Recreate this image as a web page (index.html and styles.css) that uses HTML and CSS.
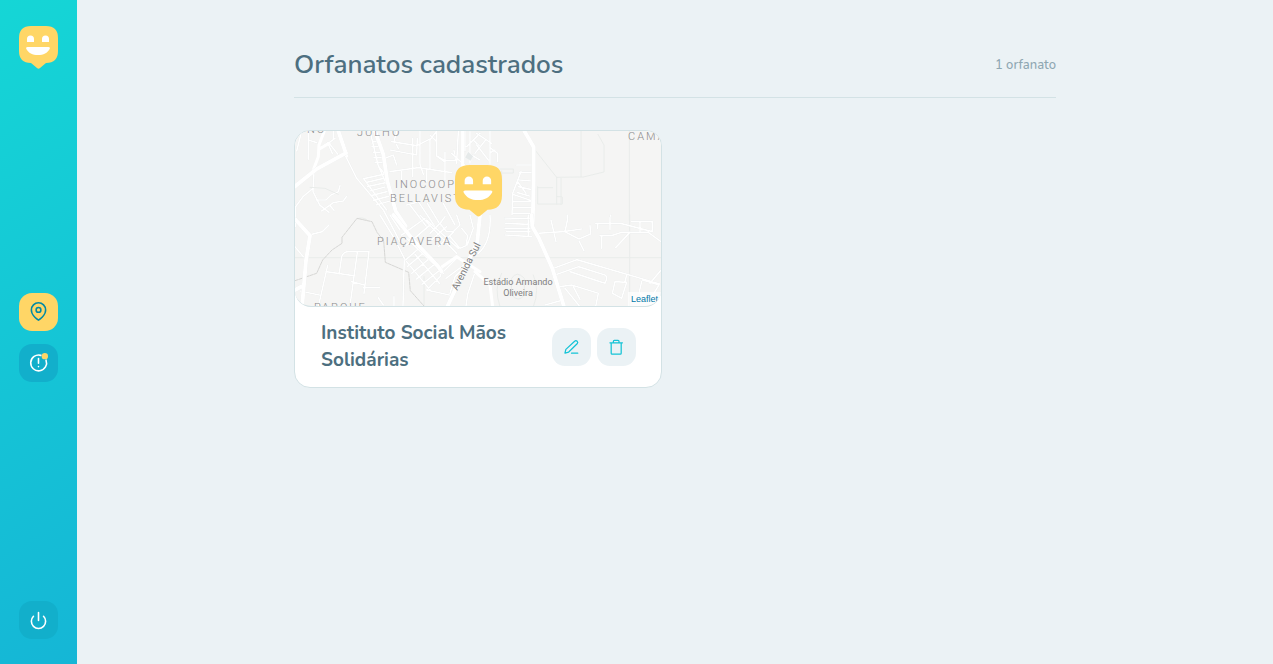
FILE: index.html
```html
<!DOCTYPE html>
<html lang="pt-BR">
<head>
<meta charset="utf-8">
<meta name="viewport" content="width=device-width, initial-scale=1">
<title>Orfanatos cadastrados</title>
<link rel="stylesheet" href="styles.css">
</head>
<body>
<svg class="defs" aria-hidden="true">
  <symbol id="smile" viewBox="0 0 39 43">
    <path fill="#ffd666" d="M12 0h15q12 0 12 12v13q0 12-12 12l-6 5q-1.500 1.300-3 0l-6-5Q0 37 0 25V12Q0 0 12 0z"/>
    <path fill="#fff" d="M8 16v-3a3.500 3.500 0 0 1 7 0v3zM23 16v-3a3.500 3.500 0 0 1 7 0v3zM8.500 21h21q2 0 1.300 1.700C28.500 27 24.500 29 19 29S9.500 27 7.200 22.700Q6.500 21 8.500 21z"/>
  </symbol>
</svg>
<div class="app">
  <aside class="sidebar">
    <svg class="logo" role="img" aria-label="Happy"><use href="#smile"/></svg>
    <nav class="menu">
      <button class="side-button active" type="button" aria-label="Orfanatos cadastrados">
        <svg class="icon" viewBox="0 0 24 24"><path d="M21 10c0 7-9 13-9 13S3 17 3 10a9 9 0 0 1 18 0z"/><circle cx="12" cy="10" r="3"/></svg>
      </button>
      <button class="side-button" type="button" aria-label="Cadastros pendentes">
        <svg class="icon" viewBox="0 0 24 24"><path d="M15 3A10 10 0 1 0 21.500 9M12 7v6M12 17v.2"/><circle class="dot" cx="20" cy="4" r="4"/></svg>
      </button>
    </nav>
    <button class="side-button" type="button" aria-label="Sair">
      <svg class="icon" viewBox="0 0 24 24"><path d="M18.360 6.640a9 9 0 1 1-12.730 0M12 2v10"/></svg>
    </button>
  </aside>
  <main class="main">
    <div class="content">
      <header class="header">
        <h1 class="title">Orfanatos cadastrados</h1>
        <span class="count">1 orfanato</span>
      </header>
      <div class="cards">
        <article class="card">
          <div class="map">
            <svg class="map-drawing" viewBox="0 0 366 175" preserveAspectRatio="xMidYMid slice" role="img" aria-label="Mapa">
              <g class="roads" transform="translate(-5 -6) scale(.3333)">
                <path class="minor" d="M55 18v85M35 18l-15 60M55 45l25 8M90 70l25-18 28 35M105 62l30-22M130 18v25M115 58l12 27M72 140l-3 60 20 40 28 22M69 190l-30 25-22 30v60M78 225l30 0 15-15 22-10 5-18M95 258l35-25 30-5 10-14M120 242l12 14"/>
                <path class="minor" d="M165 90l35 70 80 95 50 95M240 18l25 105 25 55M248 50h20M246 65h22M250 82h25M252 98h25M255 112h25M225 160l55-12M230 172l50-12M232 185l55-12M240 198l45-12M243 212l48-12M250 226l45-12M258 240l42-12M220 160l70 95M265 123l20 25"/>
                <path class="minor" d="M285 100l25-10 10 30M305 50l75 12 40-20v90M300 75l80 15 2-50M325 70l-12-25 8-27M368 40v115M390 18v100l10 30M420 45l20-27v75l25 18v-30M445 95l20 12h32l-5-30M465 110v55M300 140l85-12 100 15M335 135v35M410 130v40M440 50l-20-20M360 240l50 65M385 230l50 75M412 235l42 70M460 235l35 65M350 240l30-8"/>
                <path class="minor" d="M505 20l-5 95M525 18v60M485 85l60 55M540 20v95M530 65l40-40M535 85l35 20M550 45l20 20"/>
                <path class="block" d="M535 80l15 14-8 14-17-10z"/>
                <path class="thin" d="M60 187l45 3 40 18M200 282q15-8 30 2"/>
                <path class="road" d="M103 18L87 60 85 95 68 140M145 18l25 75M92 70l25-15M518 18v105"/>
                <path class="main-road" d="M10 188L80 132 168 84M255 18l25 70 12 80 25 90 30 45M145 18l22 65"/>
              </g>
              <g class="roads" transform="translate(180 -6) scale(.3333)">
                <path class="minor" d="M45 18v100M5 25l45 30M0 85l32-40M5 60l35 45M48 70l20 15v25M48 82l12-7"/>
                <path class="minor" d="M125 120h45M133 143h36M133 165l36 3M130 185l36 8M128 203l35 10M113 208l53 18M112 230h54M112 248h54M112 265h54M90 280h75M138 140l-25 65-2 65M128 170l25 35"/>
                <path class="thin" d="M75 144h40v-12H75M80 138v60M318 18v138M245 157l80-1 62-15V60l-18-32M180 75l65 82M245 157v80M258 160v78M188 185v52h74v-20M188 188h45M463 18v267M245 215h15"/>
                <path class="main-road" d="M148 18l28 48v100l-3 130"/>
              </g>
              <g class="roads" transform="translate(-5 84) scale(.3333)">
                <path class="thin" d="M15 128h555M402 185v100"/>
                <path class="trail" d="M15 197l65-22 18-40 28-30 30-20v-18l45-57 45 10 15 32 20 25 5 65 70 30 5 55 40 45"/>
                <path class="minor" d="M65 58l32-8 20-20M15 95l25 30M147 180l8-55q5-15 22-15h60l-15 125M202 112l-22 160M85 275l28-124M108 170l82 12M185 200l38 10M220 218h48M30 228l58 12M265 248l15 22M312 245v28M270 0l43 70 30 60-4 142M300 0l30 45"/>
                <path class="minor" d="M350 70l110 105M350 90l70-60M347 135l43-38M352 155l55-47M365 175l60-50M380 192l60-50M396 208l60-48M410 225l42-42M350 140l75 90M375 118l74 88M335 60l70-50M410 15l95 85M390 0l110 115M425 75l45-40M445 95l45-43M420 55l35-35M465 5l-15 20 20 25h20l20-20-10-30M480 65l30 35 18-8 5-30-18-22M540 0l10 40-18 50M450 180l50-50M468 190l60-45M410 225l68 15M480 235l15-50 20-20M528 273l5-35 20-60"/>
                <path class="road" d="M360 70l90 90M450 160l50-35M500 125l70 45"/>
                <path class="main-road" d="M15 12l45 50-12 75-12 140M15 225l18-10M310 0l60 75 75 80 10 15M570 0l-8 80-90 195"/>
              </g>
              <g class="roads" transform="translate(180 84) scale(.3333)">
                <path class="thin" d="M0 128h558M464 0v273"/>
                <path class="minor" d="M90 12l75-2M92 25l70 3M90 40h75M95 50h70M90 60l80 5M160 0v60M45 0q5 80-35 115M185 55l80-5 55-8M228 15l15 65M278 12l-8 38 42 22 35-15-2-25M312 78l15 30M277 0v12M407 0v12"/>
                <path class="minor" d="M362 25h75l95 25V20h-62M368 25v15M405 8v35M495 20v28M375 62h35l30-10h80l38 28M380 62v38M462 55l-40 43"/>
                <path class="minor" d="M230 162l75-28 250 73M240 180l70-25 80 25q10 6 0 25l-25-8-80-27M255 215l35-5 80 25-8 40M270 220l45 55M295 215l20 38M420 200l-8 35 28 15 15-48zM455 180l-5 20M500 200l-8 35 35 15 25-40-50-15M525 205l32-38M210 270l50-14"/>
                <path class="track" d="M110 190q15-25 38 0v50q-18 25-38 0zM80 175q-25 45-5 100M175 180q20 45 0 95"/>
                <path class="road" d="M0 170l45 40 8 65"/>
                <path class="main-road" d="M170 0l2 35 20 35 40 90 35 115"/>
              </g>
              <g class="labels">
                <text x="12" y="2">NO</text>
                <text x="62" y="5">JULHO</text>
                <text x="333" y="9">CAMA</text>
                <text x="100" y="57">INOCOOP</text>
                <text x="95" y="71">BELLAVISTA</text>
                <text x="82" y="114">PIAÇAVERA</text>
                <text x="19" y="180">PARQUE</text>
              </g>
              <g class="places">
                <text x="223" y="154">Estádio Armando</text>
                <text x="223" y="165">Oliveira</text>
                <text class="street" transform="translate(174 137) rotate(-63)">Avenida Sul</text>
              </g>
            </svg>
            <svg class="marker" aria-hidden="true"><use href="#smile"/></svg>
            <a class="attribution" href="#leaflet">Leaflet</a>
          </div>
          <footer class="card-footer">
            <h2 class="name">Instituto Social Mãos Solidárias</h2>
            <div class="actions">
              <button class="action" type="button" aria-label="Editar">
                <svg class="icon small" viewBox="0 0 24 24"><path d="M12 21h10M1.500 21l1.500-6L17 2a2.800 2.800 0 0 1 4 4L7.500 19.300z"/></svg>
              </button>
              <button class="action" type="button" aria-label="Excluir">
                <svg class="icon small" viewBox="0 0 24 24"><path d="M1.500 4.500h20M3.500 4.500v16.500q0 1.500 1.500 1.500h13q1.500 0 1.500-1.500V4.500M7 4.500V2Q7 .5 8.500 .5h6Q16 .5 16 2v2.500"/></svg>
              </button>
            </div>
          </footer>
        </article>
      </div>
    </div>
  </main>
</div>
</body>
</html>
```
FILE: styles.css
```css
* {
  box-sizing: border-box;
  margin: 0;
}

body {
  background: #ebf2f5;
  color: #4d6f80;
  font-family: Nunito, "Noto Sans", sans-serif;
}

.defs {
  position: absolute;
  width: 0;
  height: 0;
}

.app {
  display: flex;
  min-height: 100vh;
}

.sidebar {
  display: flex;
  flex: none;
  flex-direction: column;
  align-items: center;
  justify-content: space-between;
  width: 77px;
  padding: 26px 19px 25px;
  background: linear-gradient(330deg, #15b6d6 0%, #15d6d6 100%);
}

.logo {
  width: 39px;
  height: 43px;
}

.menu {
  display: flex;
  flex-direction: column;
  gap: 13px;
  padding-top: 4px;
}

.side-button,
.action {
  display: flex;
  align-items: center;
  justify-content: center;
  width: 39px;
  height: 38px;
  padding: 0;
  border: 0;
  border-radius: 13px;
  cursor: pointer;
}

.side-button {
  background: #12afcb;
  color: #fff;
}

.side-button.active {
  background: #ffd666;
  color: #0089a5;
}

.action {
  background: #ebf2f5;
  color: #15c3d6;
}

.icon {
  width: 19px;
  height: 19px;
  overflow: visible;
  fill: none;
  stroke: currentColor;
  stroke-width: 2;
  stroke-linecap: round;
  stroke-linejoin: round;
}

.icon.small {
  width: 15px;
  height: 15px;
}

.dot {
  fill: #ffd666;
  stroke: none;
}

.main {
  flex: 1;
  padding: 45px 26px;
}

.content {
  max-width: 762px;
  margin: 0 auto;
}

.header {
  display: flex;
  align-items: center;
  justify-content: space-between;
  padding-bottom: 12px;
  border-bottom: 1px solid #d3e2e5;
}

.title {
  font-size: 26px;
  font-weight: 650;
  line-height: 40px;
}

.count {
  color: #8fa7b2;
  font-size: 13px;
  font-weight: 500;
  line-height: 20px;
}

.cards {
  display: grid;
  grid-template-columns: repeat(2, 1fr);
  gap: 26px;
  margin-top: 32px;
}

.card {
  overflow: hidden;
  border: 1px solid #d3e2e5;
  border-radius: 16px;
  background: #fff;
}

.map {
  position: relative;
  height: 176px;
  overflow: hidden;
  border-bottom: 1px solid #d3e2e5;
  border-radius: 0 0 16px 16px;
  background: #f5f5f4;
}

.map-drawing {
  display: block;
  width: 100%;
  height: 100%;
}

.roads path {
  fill: none;
  stroke: #fff;
  stroke-linecap: round;
  stroke-linejoin: round;
}

.roads .minor {
  stroke-width: 5px;
  filter: drop-shadow(0 0 2px #d9dddd);
}

.roads .road {
  stroke-width: 9px;
}

.roads .main-road {
  stroke-width: 12px;
  filter: drop-shadow(0 0 2px #e3e5e5);
}

.roads .thin,
.roads .track {
  stroke: #e9ecea;
  stroke-width: 3px;
}

.roads .trail {
  stroke: #d6d6d4;
  stroke-width: 3px;
  stroke-dasharray: 9 3;
}

.roads .block {
  fill: #e6eaea;
}

.labels {
  fill: #8c8c8c;
  font-family: Roboto, sans-serif;
  font-size: 11px;
  font-weight: 300;
  letter-spacing: 2px;
}

.places {
  fill: #808080;
  font-family: Roboto, sans-serif;
  font-size: 9px;
  text-anchor: middle;
}

.street {
  font-size: 10px;
}

.marker {
  position: absolute;
  top: 34px;
  left: 50%;
  width: 47px;
  height: 52px;
  margin-left: -23px;
}

.attribution {
  position: absolute;
  right: 0;
  bottom: 0;
  padding: 0 3px;
  background: rgba(255, 255, 255, 0.7);
  color: #0078a8;
  font-family: "Liberation Sans", Arial, sans-serif;
  font-size: 9px;
  line-height: 14px;
  text-decoration: none;
}

.card-footer {
  display: flex;
  align-items: center;
  justify-content: space-between;
  gap: 26px;
  padding: 13px 25px 13px 26px;
}

.name {
  font-size: 19px;
  font-weight: 700;
  line-height: 27px;
}

.actions {
  display: flex;
  flex: none;
  gap: 6px;
}
```
